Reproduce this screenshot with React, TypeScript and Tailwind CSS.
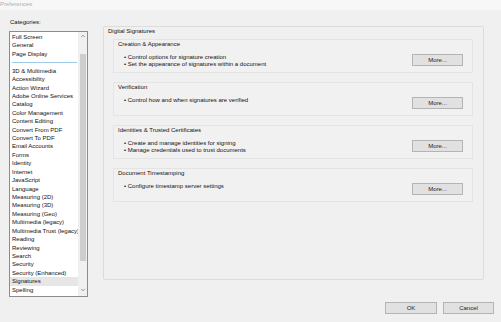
import { ChevronDown, ChevronUp } from 'lucide-react';

const topItems = ['Full Screen', 'General', 'Page Display'];

const categories = [
  '3D & Multimedia',
  'Accessibility',
  'Action Wizard',
  'Adobe Online Services',
  'Catalog',
  'Color Management',
  'Content Editing',
  'Convert From PDF',
  'Convert To PDF',
  'Email Accounts',
  'Forms',
  'Identity',
  'Internet',
  'JavaScript',
  'Language',
  'Measuring (2D)',
  'Measuring (3D)',
  'Measuring (Geo)',
  'Multimedia (legacy)',
  'Multimedia Trust (legacy)',
  'Reading',
  'Reviewing',
  'Search',
  'Security',
  'Security (Enhanced)',
  'Signatures',
  'Spelling',
];

interface Group {
  title: string;
  bullets: string[];
}

const groups: Group[] = [
  {
    title: 'Creation & Appearance',
    bullets: [
      'Control options for signature creation',
      'Set the appearance of signatures within a document',
    ],
  },
  { title: 'Verification', bullets: ['Control how and when signatures are verified'] },
  {
    title: 'Identities & Trusted Certificates',
    bullets: ['Create and manage identities for signing', 'Manage credentials used to trust documents'],
  },
  { title: 'Document Timestamping', bullets: ['Configure timestamp server settings'] },
];

function WinButton({ label, className }: { label: string; className: string }) {
  return (
    <button
      type="button"
      className={`flex items-center justify-center border border-[#b4b4b4] bg-[#e1e1e1] text-[6px] text-[#222] ${className}`}
    >
      {label}
    </button>
  );
}

export default function App() {
  return (
    <div
      className="relative h-[322px] w-[501px] overflow-hidden bg-[#f0f0f0] text-[#111]"
      style={{ fontFamily: '"Liberation Sans", Arial, sans-serif' }}
    >
      {/* Title bar */}
      <div className="h-[10px] bg-[#f7f7f7] text-[6px] leading-[8px] text-[#b0b0b0]">Preferences</div>

      <div className="flex px-[9px]">
        {/* Categories */}
        <div className="w-[79px]">
          <div className="mt-[8px] pl-[1px] text-[6px] leading-[9px]">Categories:</div>
          <div className="mt-[4px] flex h-[266px] border border-[#8c8c8c] bg-white">
            <div className="min-w-0 flex-1 overflow-hidden whitespace-nowrap pt-[1px] text-[6px] leading-[8.42px]">
              {topItems.map((item) => (
                <div key={item} className="pl-[2px]">
                  {item}
                </div>
              ))}
              <div className="flex h-[8.42px] items-center pl-[2px] pr-[1px]">
                <div className="h-px w-full bg-[#9fcbeb]" />
              </div>
              {categories.map((item) => (
                <div key={item} className={`pl-[2px] ${item === 'Signatures' ? 'bg-[#e6e6e6]' : ''}`}>
                  {item}
                </div>
              ))}
            </div>
            {/* Scrollbar */}
            <div className="flex w-[9px] shrink-0 flex-col items-center bg-[#f0f0f0]">
              <ChevronUp className="mt-[1px] h-[6px] w-[6px] text-[#606060]" strokeWidth={2.5} />
              <div className="mt-[15px] h-[207px] w-[6px] bg-[#cdcdcd]" />
              <div className="flex-1" />
              <ChevronDown className="mb-[3px] h-[6px] w-[6px] text-[#606060]" strokeWidth={2.5} />
            </div>
          </div>
        </div>

        {/* Digital Signatures panel */}
        <div className="ml-[15px] mt-[16px] h-[254px] w-[381px] rounded-[2px] border border-[#dcdcdc]">
          <div className="pl-[4px] text-[6px] leading-[9px]">Digital Signatures</div>
          <div className="ml-[9px] mt-[3px] flex w-[360px] flex-col gap-[9px]">
            {groups.map((g) => (
              <div key={g.title} className="flex h-[34px] border border-[#e4e4e4] bg-[#f1f1f1]">
                <div className="flex-1 pl-[4px]">
                  <div className="text-[6px] leading-[8px]">{g.title}</div>
                  <div className="mt-[6px] pl-[6px] text-[6px] leading-[7px]">
                    {g.bullets.map((b) => (
                      <div key={b}>• {b}</div>
                    ))}
                  </div>
                </div>
                <WinButton label="More..." className="mr-[9px] mt-[14px] h-[12px] w-[51px]" />
              </div>
            ))}
          </div>
        </div>
      </div>

      {/* Footer buttons */}
      <div className="mt-[5px] flex justify-end gap-[6px] pr-[7px]">
        <WinButton label="OK" className="h-[12px] w-[52px]" />
        <WinButton label="Cancel" className="h-[12px] w-[51px]" />
      </div>
    </div>
  );
}
